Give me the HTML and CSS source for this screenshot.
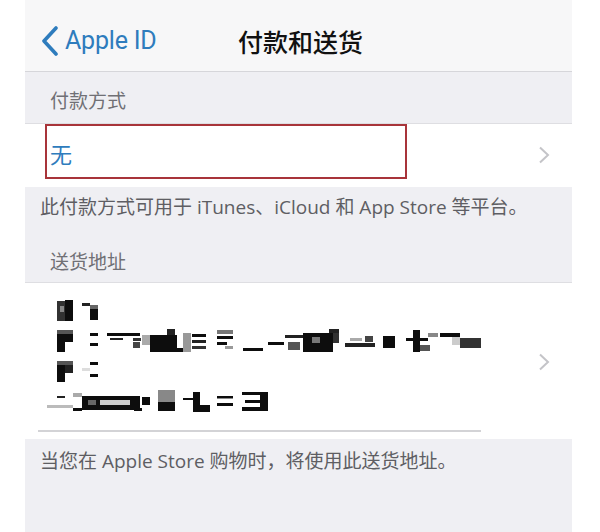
FILE: index.html
```html
<!DOCTYPE html>
<html lang="zh-CN">
<head>
<meta charset="utf-8">
<title>付款和送货</title>
<link rel="stylesheet" href="styles.css">
</head>
<body>
<div class="screen">
  <header class="nav">
    <div class="back">
      <svg class="back-chev" width="18" height="30" viewBox="0 0 18 30"><path d="M15 2 L3 15 L15 28" fill="none" stroke="#2e7cbd" stroke-width="3.6" stroke-linecap="round" stroke-linejoin="round"/></svg>
      <span class="back-label">Apple ID</span>
    </div>
    <div class="title">付款和送货</div>
    <div class="spacer"></div>
  </header>

  <div class="sec-head">付款方式</div>
  <div class="row row-pay">
    <span class="value">无</span>
    <svg class="chev" width="12" height="18" viewBox="0 0 12 18"><path d="M2 1.5 L10 9 L2 16.5" fill="none" stroke="#c4c4c8" stroke-width="2"/></svg>
    <div class="highlight"></div>
  </div>
  <div class="sec-foot">此付款方式可用于 iTunes、iCloud 和 App Store 等平台。</div>

  <div class="sec-head sec-head-2">送货地址</div>
  <div class="row row-addr">
    <div class="addr-main">
      <svg class="addr" width="450" height="130" viewBox="40 290 450 130">
        <defs><filter id="soft"><feGaussianBlur stdDeviation="0.55"/></filter></defs>
        <g filter="url(#soft)">
          <rect x="57" y="301" width="8" height="20" fill="#333"/>
          <rect x="60" y="306" width="4" height="6" fill="#888"/>
          <rect x="65" y="300" width="8" height="21" fill="#111"/>
          <rect x="82" y="303" width="8" height="3" fill="#222"/>
          <rect x="90" y="305" width="8" height="4" fill="#666"/>
          <rect x="90" y="309" width="8" height="11" fill="#111"/>

          <rect x="57" y="330" width="16" height="4" fill="#555"/>
          <rect x="57" y="334" width="8" height="18" fill="#111"/>
          <rect x="65" y="334" width="8" height="8" fill="#111"/>
          <rect x="90" y="333" width="8" height="3" fill="#111"/>
          <rect x="90" y="343" width="8" height="3" fill="#111"/>
          <rect x="107" y="333" width="33" height="3" fill="#111"/>
          <rect x="110" y="338" width="13" height="2" fill="#222"/>
          <rect x="133" y="338" width="8" height="3" fill="#333"/>
          <rect x="133" y="342" width="7" height="6" fill="#444"/>
          <rect x="142" y="335" width="12" height="10" fill="#aaa"/>
          <rect x="150" y="335" width="27" height="17" fill="#111"/>
          <rect x="167" y="329" width="8" height="6" fill="#222"/>
          <rect x="150" y="348" width="40" height="4" fill="#111"/>
          <rect x="183" y="333" width="8" height="19" fill="#999"/>
          <rect x="192" y="334" width="14" height="3" fill="#111"/>
          <rect x="192" y="340" width="14" height="3" fill="#222"/>
          <rect x="192" y="346" width="14" height="3" fill="#333"/>
          <rect x="217" y="330" width="16" height="4" fill="#777"/>
          <rect x="217" y="336" width="16" height="3" fill="#111"/>
          <rect x="217" y="342" width="10" height="3" fill="#111"/>
          <rect x="225" y="346" width="8" height="3" fill="#999"/>
          <rect x="243" y="348" width="20" height="3" fill="#111"/>
          <rect x="268" y="342" width="16" height="3" fill="#111"/>
          <rect x="285" y="335" width="20" height="3" fill="#222"/>
          <rect x="288" y="342" width="12" height="8" fill="#555"/>
          <rect x="303" y="333" width="30" height="19" fill="#111"/>
          <rect x="312" y="337" width="8" height="6" fill="#777"/>
          <rect x="329" y="329" width="10" height="4" fill="#222"/>
          <rect x="333" y="333" width="6" height="10" fill="#333"/>
          <rect x="345" y="343" width="30" height="4" fill="#222"/>
          <rect x="350" y="338" width="12" height="3" fill="#aaa"/>
          <rect x="365" y="336" width="8" height="6" fill="#444"/>
          <rect x="383" y="336" width="12" height="12" fill="#111"/>
          <rect x="406" y="338" width="22" height="3" fill="#111"/>
          <rect x="413" y="330" width="7" height="22" fill="#111"/>
          <rect x="420" y="345" width="10" height="6" fill="#555"/>
          <rect x="428" y="333" width="10" height="4" fill="#888"/>
          <rect x="440" y="333" width="20" height="4" fill="#111"/>
          <rect x="452" y="337" width="8" height="8" fill="#ccc"/>
          <rect x="460" y="338" width="21" height="10" fill="#333"/>

          <rect x="57" y="361" width="16" height="4" fill="#555"/>
          <rect x="57" y="365" width="8" height="17" fill="#111"/>
          <rect x="65" y="365" width="8" height="8" fill="#222"/>
          <rect x="90" y="362" width="8" height="3" fill="#111"/>
          <rect x="90" y="374" width="8" height="3" fill="#111"/>
          <rect x="82" y="368" width="8" height="3" fill="#ddd"/>

          <rect x="57" y="396" width="8" height="2" fill="#222"/>
          <rect x="47" y="405" width="26" height="3" fill="#bbb"/>
          <rect x="73" y="393" width="9" height="4" fill="#aaa"/>
          <rect x="73" y="408" width="9" height="3" fill="#111"/>
          <rect x="82" y="396" width="58" height="14" fill="#111"/>
          <rect x="100" y="400" width="30" height="5" fill="#ccc"/>
          <rect x="88" y="400" width="8" height="5" fill="#666"/>
          <rect x="134" y="408" width="8" height="3" fill="#111"/>
          <rect x="142" y="397" width="8" height="8" fill="#111"/>
          <rect x="158" y="390" width="17" height="12" fill="#888"/>
          <rect x="158" y="402" width="17" height="9" fill="#111"/>
          <rect x="183" y="398" width="10" height="2" fill="#111"/>
          <rect x="193" y="392" width="7" height="20" fill="#111"/>
          <rect x="200" y="405" width="10" height="7" fill="#111"/>
          <rect x="217" y="396" width="16" height="2.5" fill="#111"/>
          <rect x="217" y="403" width="16" height="3" fill="#111"/>
          <rect x="242" y="392" width="26" height="3" fill="#111"/>
          <rect x="245" y="400" width="23" height="3" fill="#111"/>
          <rect x="242" y="407" width="26" height="4" fill="#111"/>
          <rect x="260" y="392" width="8" height="19" fill="#111"/>
        </g>
      </svg>
      <svg class="chev chev-addr" width="12" height="18" viewBox="0 0 12 18"><path d="M2 1.5 L10 9 L2 16.5" fill="none" stroke="#c4c4c8" stroke-width="2"/></svg>
    </div>
    <div class="sep"></div>
  </div>
  <div class="sec-foot sec-foot-2">当您在 Apple Store 购物时，将使用此送货地址。</div>
</div>
</body>
</html>
```

FILE: styles.css
```css
html, body {
  margin: 0;
  padding: 0;
  background: #ffffff;
}

body {
  width: 600px;
  height: 532px;
  overflow: hidden;
  font-family: "Liberation Sans", "Noto Sans CJK SC", sans-serif;
}

.screen {
  margin-left: 25px;
  width: 547px;
  height: 532px;
  background: #efeff3;
  display: flex;
  flex-direction: column;
}

.nav {
  height: 72px;
  box-sizing: border-box;
  background: #f7f7f8;
  border-bottom: 1px solid #d6d6da;
  display: grid;
  grid-template-columns: 1fr auto 1fr;
  align-items: center;
  padding-top: 10px;
}

.back {
  display: flex;
  align-items: center;
  gap: 6px;
  padding-left: 16px;
}

.back-chev {
  display: block;
}

.back-label {
  font-family: Roboto, "Liberation Sans", sans-serif;
  font-size: 25px;
  color: #2e7cbd;
  letter-spacing: -0.2px;
}

.title {
  font-family: "Noto Sans CJK SC", sans-serif;
  font-size: 25px;
  font-weight: 500;
  color: #111;
  margin-left: 4px;
}

.sec-head {
  height: 51px;
  box-sizing: border-box;
  padding: 15px 0 0 25px;
  font-family: "Noto Sans CJK SC", sans-serif;
  font-size: 19px;
  line-height: 26px;
  color: #707075;
}

.row {
  background: #ffffff;
  border-top: 1px solid #dedee2;
  position: relative;
}

.row-pay {
  height: 64px;
  box-sizing: border-box;
  display: flex;
  align-items: center;
  justify-content: space-between;
  padding: 0 22px 2px 25px;
}

.value {
  font-family: "Noto Sans CJK SC", sans-serif;
  font-size: 22px;
  color: #2e7cbd;
  margin-top: -4px;
}

.chev {
  display: block;
}

.highlight {
  position: absolute;
  left: 20px;
  top: 0;
  width: 358px;
  height: 51px;
  border: 2px solid #a8343a;
}

.sec-foot {
  font-family: "Open Sans", "Noto Sans CJK SC", sans-serif;
  font-size: 19px;
  line-height: 26px;
  color: #5e5e63;
  padding: 7px 0 0 15px;
  height: 44px;
  box-sizing: border-box;
  white-space: nowrap;
}

.sec-head-2 {
  height: 51px;
  padding-top: 17px;
}

.row-addr {
  height: 157px;
  box-sizing: border-box;
  padding-top: 7px;
}

.addr-main {
  display: flex;
  justify-content: space-between;
  align-items: flex-start;
  padding-right: 22px;
}

.addr {
  display: block;
  margin-left: 15px;
}

.chev-addr {
  margin-top: 63px;
}

.sep {
  margin: 10px 0 0 13px;
  width: 443px;
  height: 2px;
  background: #d3d3d6;
}

.sec-foot-2 {
  padding-top: 9px;
  height: auto;
}
```
